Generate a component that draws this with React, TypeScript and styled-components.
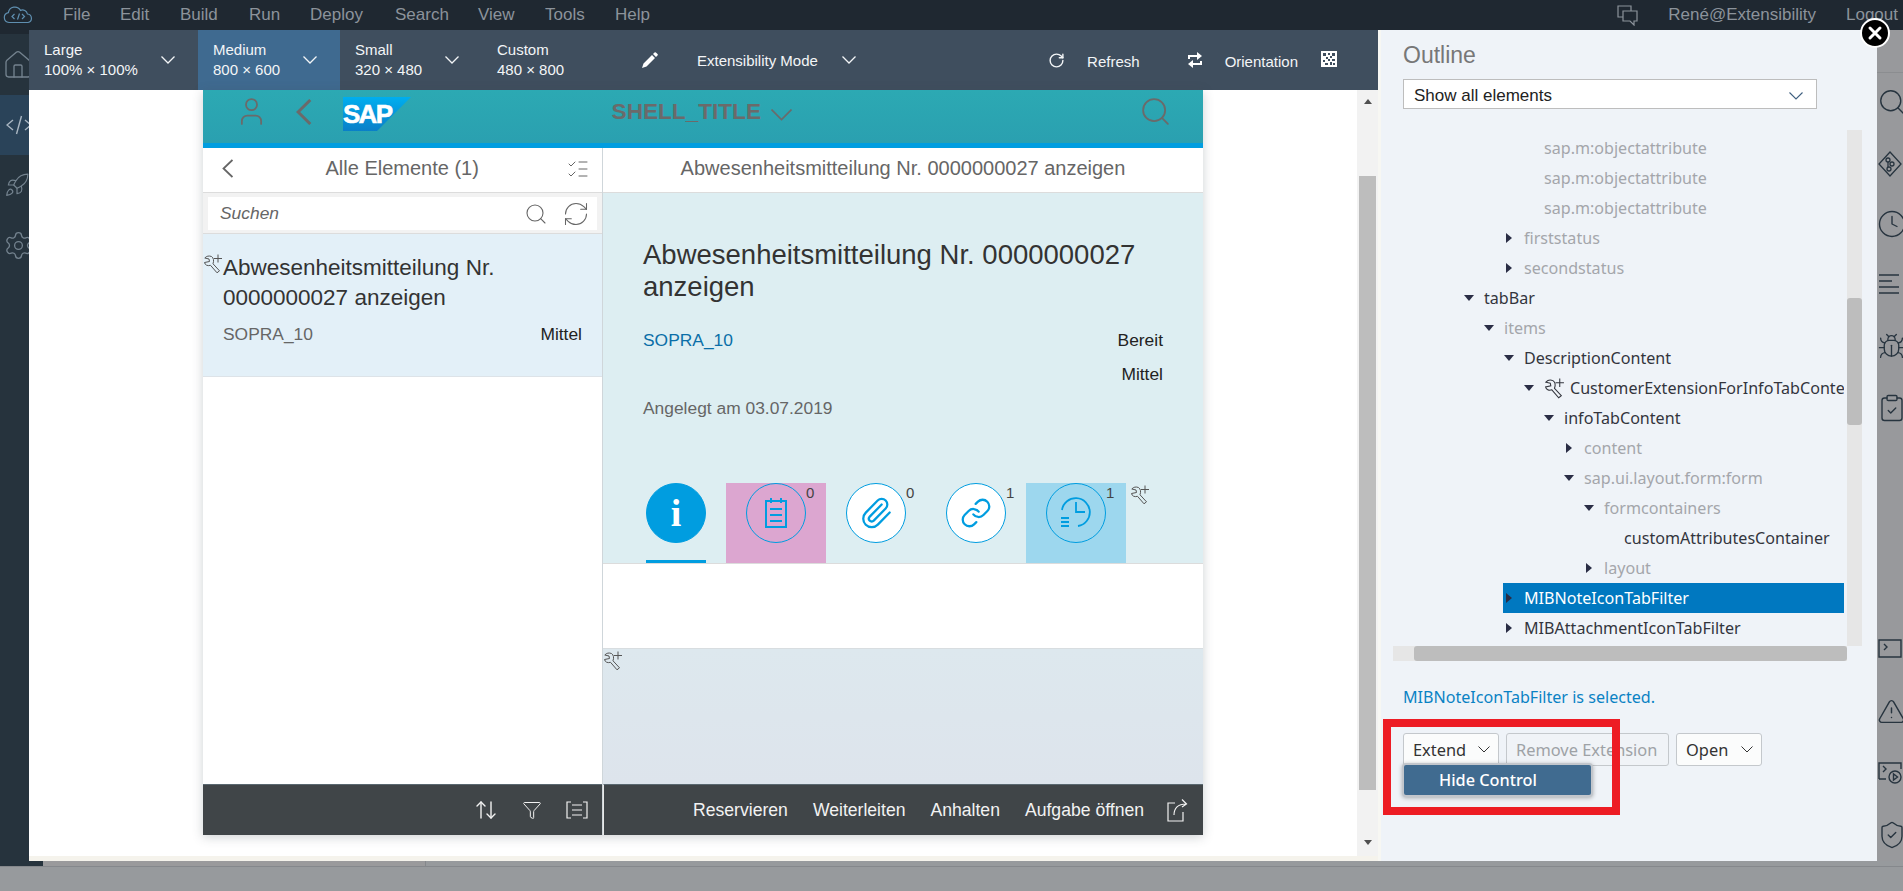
import React from "react";
import styled, { createGlobalStyle } from "styled-components";
import {
  Search, RefreshCw, RotateCw, House, Rocket, Settings, Bug,
  Clock, ClipboardCheck, TriangleAlert, Paperclip, Link, ShieldCheck, User, ArrowUpDown, Funnel,
  ListChecks,
} from "lucide-react";

const GlobalStyle = createGlobalStyle`
  html, body { margin: 0; padding: 0; overflow: hidden; background: #979a9d; }
  * { box-sizing: border-box; }
`;

const Page = styled.div`
  position: relative;
  width: 1903px;
  height: 891px;
  overflow: hidden;
  display: flex;
  flex-direction: column;
  font-family: "Liberation Sans", Arial, sans-serif;
  background: #979a9d;
`;

/* ---------- top menu ---------- */
const TopBar = styled.header`
  height: 30px;
  flex: none;
  background: #1f2831;
  display: flex;
  align-items: center;
  color: #8c939b;
  font-size: 17px;
`;
const LogoSlot = styled.div`
  width: 63px;
  padding-left: 3px;
  display: flex;
`;
const MenuItem = styled.span<{ $w: number }>`
  width: ${(p) => p.$w}px;
  flex: none;
`;
const TopRight = styled.div`
  margin-left: auto;
  display: flex;
  align-items: center;
  color: #8c939b;
  padding-right: 5px;
`;
const UserName = styled.span`
  margin: 0 30px 0 30px;
`;

/* ---------- body ---------- */
const Body = styled.div`
  height: 831px;
  flex: none;
  display: flex;
`;
const Sidebar = styled.nav`
  width: 29px;
  flex: none;
  background: #26333d;
  border-top: 4px solid #1f2831;
  display: flex;
  flex-direction: column;
  overflow: hidden;
`;
const SideButton = styled.div<{ $active?: boolean; $h?: number; $pad: number }>`
  height: ${(p) => p.$h ?? 60}px;
  flex: none;
  display: flex;
  align-items: center;
  padding-left: ${(p) => p.$pad}px;
  background: ${(p) => (p.$active ? "#2a4359" : "transparent")};
  color: ${(p) => (p.$active ? "#a9b6c2" : "#74838f")};
  svg { flex: none; }
`;
const MainColumn = styled.main`
  width: 1349px;
  flex: none;
  display: flex;
  flex-direction: column;
`;
const Toolbar = styled.div`
  height: 60px;
  flex: none;
  background: #3f4e5e;
  color: #f3f5f7;
  display: flex;
  align-items: center;
  font-size: 15px;
`;
const SizeTab = styled.div<{ $w: number; $active?: boolean }>`
  width: ${(p) => p.$w}px;
  height: 60px;
  flex: none;
  padding: 0 23px 0 15px;
  display: flex;
  align-items: center;
  justify-content: space-between;
  background: ${(p) => (p.$active ? "#3f6a90" : "transparent")};
`;
const SizeLabel = styled.div`
  line-height: 20px;
  white-space: nowrap;
  margin-top: -1px;
`;
const ToolbarEdit = styled.div`
  display: flex;
  align-items: center;
  margin-left: 30px;
`;
const ModeText = styled.span`
  margin: 0 24px 0 39px;
`;
const ToolbarRight = styled.div`
  margin-left: auto;
  padding-right: 41px;
  display: flex;
  align-items: center;
`;
const ToolText = styled.span<{ $l: number; $r: number }>`
  margin: 2px ${(p) => p.$r}px 0 ${(p) => p.$l}px;
`;
const QrMark = styled.div`
  width: 16px;
  height: 16px;
  background: #fff;
  margin-top: -3px;
  display: flex;
`;

/* ---------- preview ---------- */
const PreviewRow = styled.div`
  height: 771px;
  flex: none;
  display: flex;
`;
const PreviewStage = styled.div`
  width: 1328px;
  flex: none;
  background: #fff;
  border-bottom: 5px solid #f5f3ec;
  padding-left: 174px;
`;
const VScroll = styled.div`
  width: 21px;
  flex: none;
  background: #f2f2f2;
  border-bottom: 5px solid #f5f3ec;
  display: flex;
  flex-direction: column;
  align-items: center;
  padding-top: 9px;
`;
const ArrowUp = styled.div`
  width: 0;
  height: 0;
  border-left: 4.5px solid transparent;
  border-right: 4.5px solid transparent;
  border-bottom: 5px solid #505050;
`;
const ArrowDownMark = styled.div`
  width: 0;
  height: 0;
  border-left: 4.5px solid transparent;
  border-right: 4.5px solid transparent;
  border-top: 5px solid #505050;
  margin-top: 50px;
`;
const VThumb = styled.div`
  width: 17px;
  height: 614px;
  margin-top: 72px;
  flex: none;
  background: #bdbdbd;
`;
const Phone = styled.div`
  width: 1000px;
  height: 745px;
  display: flex;
  flex-direction: column;
  box-shadow: 0 2px 10px rgba(60, 70, 80, 0.25);
  background: #fff;
`;
const ShellBar = styled.div`
  height: 58px;
  flex: none;
  display: flex;
  align-items: flex-start;
  border-bottom: 5px solid #009de0;
  background: linear-gradient(#2ca9b3, #2aa0b0);
  color: #6b6a6a;
  padding-left: 32px;
`;
const ShellIcon = styled.div<{ $ml: number; $mt: number }>`
  margin-left: ${(p) => p.$ml}px;
  margin-top: ${(p) => p.$mt}px;
  display: flex;
  flex: none;
`;
const ShellTitle = styled.div`
  margin-left: 201px;
  margin-top: 8px;
  line-height: 28px;
  font-size: 22.6px;
  font-weight: 700;
  color: #6b6a6a;
  white-space: nowrap;
`;
const Panes = styled.div`
  height: 687px;
  flex: none;
  display: flex;
`;
const Master = styled.section`
  width: 400px;
  flex: none;
  display: flex;
  flex-direction: column;
  border-right: 1px solid #cfd6da;
`;
const PaneHeader = styled.div`
  height: 45px;
  flex: none;
  display: flex;
  align-items: center;
  background: #fff;
  border-bottom: 1px solid #dcdcdc;
  color: #666;
  padding-bottom: 3px;
`;
const MasterHeaderTitle = styled.span`
  margin: 0 auto;
  padding-left: 5px;
  font-size: 20px;
`;
const DetailHeaderTitle = styled.span`
  margin: 0 auto;
  font-size: 20px;
`;
const HeaderIconLeft = styled.div`
  padding-left: 19px;
  display: flex;
`;
const HeaderIconRight = styled.div`
  padding-right: 12px;
  display: flex;
`;
const SearchBand = styled.div`
  height: 41px;
  flex: none;
  background: #f2f2f2;
  border-bottom: 1px solid #dcdcdc;
  padding: 4px 5px;
`;
const SearchInput = styled.div`
  height: 33px;
  background: #fff;
  display: flex;
  align-items: center;
  padding: 0 7px 0 12px;
  color: #666;
  font-size: 17.4px;
  font-style: italic;
`;
const SearchActions = styled.div`
  margin-left: auto;
  display: flex;
  align-items: center;
  gap: 14px;
`;
const MasterItem = styled.div`
  height: 143px;
  flex: none;
  position: relative;
  background: #e3f0f8;
  border-bottom: 1px solid #dde3e8;
  padding: 19px 20px 0 20px;
`;
const MasterItemTitle = styled.div`
  font-size: 22.5px;
  line-height: 30px;
  color: #333;
`;
const MetaRow = styled.div`
  display: flex;
  justify-content: space-between;
  margin-top: 11px;
  font-size: 17.4px;
  line-height: 20px;
`;
const MetaOwner = styled.span`
  color: #666;
`;
const MetaValue = styled.span`
  color: #222;
`;
const Overlay = styled.div<{ $l: number; $t: number }>`
  position: absolute;
  left: ${(p) => p.$l}px;
  top: ${(p) => p.$t}px;
  display: flex;
  color: #555;
`;
const Spacer = styled.div`
  flex: 1;
  background: #fff;
`;
const Footer = styled.div`
  height: 51px;
  flex: none;
  background: #404548;
  border-top: 1px solid #5a6870;
  color: #f2f2f2;
  display: flex;
  align-items: center;
  justify-content: flex-end;
  font-size: 17.6px;
`;
const MasterFooter = styled(Footer)`
  gap: 24px;
  padding-right: 14px;
`;
const DetailFooter = styled(Footer)`
  padding-right: 15px;
  border-left: 1px solid #e8e8e8;
`;
const FooterAction = styled.span<{ $mr: number }>`
  margin-right: ${(p) => p.$mr}px;
`;
const Detail = styled.section`
  flex: 1;
  display: flex;
  flex-direction: column;
`;
const DetailHero = styled.div`
  height: 371px;
  flex: none;
  position: relative;
  background: #ddeef2;
  border-bottom: 1px solid #dcdcdc;
  display: flex;
  flex-direction: column;
  padding: 46px 40px 0 40px;
`;
const HeroTitle = styled.h1`
  margin: 0;
  font-size: 27.5px;
  font-weight: 400;
  line-height: 32px;
  color: #333;
  width: 510px;
`;
const HeroRow = styled.div<{ $mt: number }>`
  display: flex;
  justify-content: space-between;
  font-size: 17.4px;
  line-height: 20px;
  margin-top: ${(p) => p.$mt}px;
`;
const HeroLink = styled.span`
  color: #0a6ea8;
`;
const HeroMuted = styled.span`
  color: #666;
`;
const HeroEnd = styled.span`
  color: #222;
  margin-left: auto;
`;
const TabStrip = styled.div`
  margin-top: auto;
  display: flex;
  height: 80px;
  margin-left: 3px;
`;
const TabCell = styled.div<{ $bg?: string }>`
  width: 100px;
  height: 80px;
  flex: none;
  position: relative;
  background: ${(p) => p.$bg ?? "transparent"};
  padding-left: 20px;
`;
const InfoCell = styled.div`
  width: 60px;
  height: 80px;
  flex: none;
  margin-right: 20px;
  border-bottom: 3px solid #009de0;
`;
const TabCircle = styled.div<{ $fill?: string }>`
  width: 60px;
  height: 60px;
  border-radius: 50%;
  border: 1px solid #009de0;
  background: ${(p) => p.$fill ?? "transparent"};
  display: flex;
  align-items: center;
  justify-content: center;
  color: #009de0;
`;
const InfoGlyph = styled.span`
  color: #fff;
  font-family: "Liberation Serif", serif;
  font-weight: 700;
  font-size: 38px;
  line-height: 1;
`;
const TabBadge = styled.span`
  position: absolute;
  left: 80px;
  top: 1px;
  font-size: 15px;
  color: #444;
`;
const DetailWhite = styled.div`
  height: 85px;
  flex: none;
  background: #fff;
  border-bottom: 1px solid #d8dde0;
`;
const DetailGrey = styled.div`
  flex: 1;
  position: relative;
  background: linear-gradient(#dde8ee, #dde4ec);
`;

/* ---------- outline ---------- */
const Outline = styled.aside`
  width: 499px;
  flex: none;
  background: #eff3f8;
  border-left: 3px solid #f7f7f3;
  font-family: "Noto Sans", "Open Sans", sans-serif;
  position: relative;
  padding: 0 0 0 22px;
`;
const OutlineTitle = styled.h2`
  margin: 0;
  padding-top: 11px;
  height: 49px;
  font-size: 23px;
  font-weight: 300;
  font-family: "Liberation Sans", sans-serif;
  line-height: 28px;
  color: #777;
`;
const SelectBox = styled.div`
  width: 414px;
  height: 30px;
  background: #fff;
  border: 1px solid #bdbdbd;
  display: flex;
  align-items: center;
  justify-content: space-between;
  padding: 3px 13px 0 10px;
  font-size: 17px;
  color: #222;
  font-family: "Liberation Sans", sans-serif;
`;
const TreeFrame = styled.div`
  margin: 21px 0 0 -10px;
  width: 469px;
  height: 531px;
  display: grid;
  grid-template-columns: 454px 15px;
  grid-template-rows: 516px 15px;
`;
const TreeView = styled.div`
  overflow: hidden;
  padding-top: 3px;
`;
const TreeRow = styled.div<{ $dim?: boolean; $selected?: boolean; $pad: number }>`
  height: 30px;
  display: flex;
  align-items: center;
  white-space: nowrap;
  font-size: 16.1px;
  padding-left: ${(p) => p.$pad}px;
  color: ${(p) => (p.$selected ? "#fff" : p.$dim ? "#a4a6ab" : "#33353d")};
  background: ${(p) => (p.$selected ? "#0078c0" : "transparent")};
  margin-left: ${(p) => (p.$selected ? 110 : 0)}px;
  margin-right: 3px;
  overflow: hidden;
`;
const Caret = styled.span<{ $open?: boolean; $none?: boolean }>`
  width: 21px;
  flex: none;
  display: flex;
  justify-content: center;
  padding-right: 9px;
  &::before {
    content: "";
    display: ${(p) => (p.$none ? "none" : "block")};
    width: 0;
    height: 0;
    ${(p) =>
      p.$open
        ? "border-left: 5px solid transparent; border-right: 5px solid transparent; border-top: 6px solid #2a2d45;"
        : "border-top: 5px solid transparent; border-bottom: 5px solid transparent; border-left: 6px solid #2a2d45;"}
  }
`;
const TreeWrench = styled.span`
  margin-right: 5px;
  display: flex;
  color: #33353d;
`;
const VTrack = styled.div`
  background: #e6e6e6;
  padding-top: 168px;
`;
const VTrackThumb = styled.div`
  height: 127px;
  background: #bdbdbd;
  border-radius: 3px;
`;
const HTrack = styled.div`
  background: #e6e6e6;
  padding-left: 21px;
`;
const HTrackThumb = styled.div`
  height: 15px;
  background: #bdbdbd;
  border-radius: 3px;
`;
const SelectedNote = styled.div`
  margin-top: 25px;
  height: 22px;
  line-height: 22px;
  font-size: 16.1px;
  color: #0a82c4;
`;
const ButtonRow = styled.div`
  position: relative;
  margin-top: 25px;
  display: flex;
  gap: 7px;
`;
const OutlineButton = styled.div<{ $w: number; $disabled?: boolean }>`
  width: ${(p) => p.$w}px;
  height: 33px;
  background: ${(p) => (p.$disabled ? "#f0f3f7" : "#fbfcfc")};
  border: 1px solid #c4c8cc;
  border-radius: 3px;
  display: flex;
  align-items: center;
  justify-content: space-between;
  padding: 0 8px 0 9px;
  font-size: 16.4px;
  color: ${(p) => (p.$disabled ? "#9ea2a6" : "#333")};
  white-space: nowrap;
`;
const Menu = styled.div`
  position: absolute;
  left: -1px;
  top: 30px;
  width: 191px;
  height: 34px;
  background: #406b90;
  border: 2px solid #c2c6cc;
  border-radius: 4px;
  box-shadow: 0 1px 4px rgba(0, 0, 0, 0.3);
  color: #fff;
  font-size: 16.3px;
  font-weight: 500;
  display: flex;
  align-items: center;
  padding-left: 35px;
`;
const Highlight = styled.div`
  position: absolute;
  left: 2px;
  top: 689px;
  width: 237px;
  height: 96px;
  border: 8px solid #ed1c24;
`;
const Rail = styled.aside`
  flex: 1;
  background: #98999c;
  display: flex;
  flex-direction: column;
  color: #27343f;
  overflow: hidden;
`;
const RailHead = styled.div`
  height: 43px;
  flex: none;
  border-bottom: 1px solid #8b8d90;
  margin-bottom: -2px;
`;
const RailIcon = styled.div<{ $mt?: number; $ml: number }>`
  height: 62px;
  flex: none;
  margin-top: ${(p) => p.$mt ?? 0}px;
  padding-left: ${(p) => p.$ml}px;
  display: flex;
  align-items: center;
  svg { flex: none; }
`;
const CloseBadge = styled.div`
  position: absolute;
  left: 1860px;
  top: 18px;
  width: 30px;
  height: 30px;
  border-radius: 50%;
  background: #000;
  border: 2px solid #fff;
  display: flex;
  align-items: center;
  justify-content: center;
  z-index: 3;
`;

/* ---------- bottom ---------- */
const BottomTrack = styled.div`
  height: 6px;
  flex: none;
  display: flex;
  border-bottom: 1px solid #85888c;
  background: #90939a;
`;
const BottomDark = styled.div`
  width: 43px;
  background: #26333d;
`;
const BottomLight = styled.div`
  width: 383px;
  background: #9a9a9c;
  border-right: 1px solid #85888c;
`;
const BottomFill = styled.div`
  flex: 1;
  background: #979a9d;
`;

/* ---------- drawings ---------- */
const WrenchPlus = ({ size = 20 }: { size?: number }) => (
  <svg width={size} height={size} viewBox="0 0 20 20" fill="none" stroke="currentColor" strokeWidth="1">
    <path d="M8.500 2.500C6 1.500 3.500 2 1.800 4L6 5 6.500 7.500 1.500 8.500C2 11 4.500 12.300 7.500 11.300L14 18.800 16.500 16.800 10 9.800C11 7 10.800 4 8.500 2.500Z" />
    <path d="M15 .5v8M11 4.500h8" />
  </svg>
);

const Chevron = ({ w, color = "currentColor", sw = 1.3 }: { w: number; color?: string; sw?: number }) => (
  <svg width={w} height={w / 2 + 1} viewBox={`0 0 ${w} ${w / 2 + 1}`} fill="none" stroke={color} strokeWidth={sw}>
    <path d={`M.5.5 ${w / 2} ${w / 2} ${w - 0.5} .5`} />
  </svg>
);

const BackChevron = ({ h, sw }: { h: number; sw: number }) => (
  <svg width={h * 0.6} height={h} viewBox={`0 0 ${h * 0.6} ${h}`} fill="none" stroke="currentColor" strokeWidth={sw}>
    <path d={`M${h * 0.55} 1 ${h * 0.08} ${h / 2} ${h * 0.55} ${h - 1}`} />
  </svg>
);

const CloudLogo = () => (
  <svg width="31" height="18" viewBox="0 0 31 18" fill="none" stroke="#5f8fb0" strokeWidth="1.2">
    <path d="M8 16.500H6a5 5 0 0 1-.6-9.900A6.500 6.500 0 0 1 17.500 4.400 5 5 0 0 1 24.400 8 4.300 4.300 0 0 1 25 16.500Z" />
    <path d="M11.500 8 9 10.500 11.500 13M19 8l2.500 2.500L19 13M16.500 7.500l-2 6" />
  </svg>
);

const ChatMark = () => (
  <svg width="21" height="21" viewBox="0 0 21 21" fill="none" stroke="#8c939b" strokeWidth="1.2">
    <path d="M6 12H1V1h13v5" />
    <path d="M6 6h14v10h-3v4l-4-4H6Z" />
  </svg>
);

const CodeMark = () => (
  <svg width="26" height="22" viewBox="0 0 26 22" fill="none" stroke="currentColor" strokeWidth="1.4">
    <path d="M7 6 1 11l6 5M19 6l6 5-6 5M15.500 2l-5 18" />
  </svg>
);

const PencilMark = () => (
  <svg width="16" height="16" viewBox="0 0 16 16" fill="#fff">
    <path d="M0 16l1.500-4.500L10 3l3 3-8.500 8.500ZM11 2l1.500-1.500a1 1 0 0 1 1.400 0l1.600 1.600a1 1 0 0 1 0 1.400L14 5Z" />
  </svg>
);

const OrientationMark = () => (
  <svg width="16" height="16" viewBox="0 0 16 16" fill="#fff">
    <path d="M1 3h9V0l5 4-5 4V5H3v2H1ZM15 13H6v3L1 12l5-4v3h7V9h2Z" />
  </svg>
);

const QrPattern = () => (
  <svg width="16" height="16" viewBox="0 0 16 16" fill="#3f4e5e">
    <path d="M2 2h3v3H2zM7 2h2v2H7zM11 2h3v3h-3zM5 6h2v2H5zM9 5h2v2H9zM2 9h2v2H2zM7 8h2v2H7zM11 8h3v2h-3zM4 12h3v2H4zM9 11h2v3H9zM12 12h2v2h-2z" />
  </svg>
);

const SapLogo = () => (
  <svg width="68" height="34" viewBox="0 0 68 34">
    <defs>
      <linearGradient id="sapBlue" x1="0" y1="0" x2="0" y2="1">
        <stop offset="0" stopColor="#00aeef" />
        <stop offset="1" stopColor="#0a7fc8" />
      </linearGradient>
    </defs>
    <polygon points="0,0 68,0 34,34 0,34" fill="url(#sapBlue)" />
    <text x="0" y="26" fontFamily="Liberation Sans" fontWeight="700" fontSize="26" fill="#fff" textLength="50" stroke="#fff" strokeWidth=".6">SAP</text>
  </svg>
);

const NoteMark = () => (
  <svg width="24" height="32" viewBox="0 0 24 32" fill="none" stroke="currentColor" strokeWidth="2">
    <path d="M2 4h20v26H2zM7 1v5M17 1v5M6 12h12M6 18h12M6 24h12" />
  </svg>
);

const HistoryMark = () => (
  <svg width="34" height="36" viewBox="0 0 34 36" fill="none" stroke="currentColor" strokeWidth="1.800">
    <path d="M3 15A14 14 0 1 1 19 31M17 7v10h9M2 23h8M2 27h8M2 31h8" />
  </svg>
);

const DiamondMark = () => (
  <svg width="24" height="26" viewBox="0 0 24 26" fill="none" stroke="currentColor" strokeWidth="1.300">
    <path d="M12 1 23 13 12 25 1 13Z" />
    <circle cx="10" cy="9" r="2" />
    <circle cx="14" cy="13" r="2" />
    <circle cx="11" cy="18" r="2" />
    <path d="M10 11v5" />
  </svg>
);

const LinesMark = () => (
  <svg width="23" height="22" viewBox="0 0 23 22" fill="none" stroke="currentColor" strokeWidth="1.600">
    <path d="M1 2h20M1 8h13M1 14h20M1 20h20" />
  </svg>
);

const ConsoleMark = () => (
  <svg width="24" height="20" viewBox="0 0 24 20" fill="none" stroke="currentColor" strokeWidth="1.400">
    <path d="M1 1h22v17H1zM6 5l3 3-3 3" />
  </svg>
);

const ConsolePlayMark = () => (
  <svg width="24" height="24" viewBox="0 0 24 24" fill="none" stroke="currentColor" strokeWidth="1.400">
    <path d="M1 18V2h22v6M1 18h7M5 5l3 3-3 3" />
    <circle cx="17" cy="16" r="6" />
    <path d="M15.500 13v6l4-3Z" />
  </svg>
);

const NotesFooterMark = () => (
  <svg width="22" height="20" viewBox="0 0 22 20" fill="none" stroke="currentColor" strokeWidth="1.200">
    <path d="M5 2H1v16h4M17 2h4v16h-4M6 5h10M6 10h10M6 15h10" />
  </svg>
);

const ShareMark = () => (
  <svg width="22" height="24" viewBox="0 0 22 24" fill="none" stroke="currentColor" strokeWidth="1.200">
    <path d="M9 5H2v18h15v-9" />
    <path d="M8 17C8 10 12 6 20 6M16 1.500 20.500 6 16 9" />
  </svg>
);

const menuItems: [string, number][] = [
  ["File", 57], ["Edit", 60], ["Build", 69], ["Run", 61], ["Deploy", 85],
  ["Search", 83], ["View", 67], ["Tools", 70], ["Help", 60],
];

type Node = { t: string; lvl: number; dim?: boolean; caret?: "open" | "closed"; selected?: boolean; wrench?: boolean };
const nodes: Node[] = [
  { t: "sap.m:objectattribute", lvl: 3, dim: true },
  { t: "sap.m:objectattribute", lvl: 3, dim: true },
  { t: "sap.m:objectattribute", lvl: 3, dim: true },
  { t: "firststatus", lvl: 2, dim: true, caret: "closed" },
  { t: "secondstatus", lvl: 2, dim: true, caret: "closed" },
  { t: "tabBar", lvl: 0, caret: "open" },
  { t: "items", lvl: 1, dim: true, caret: "open" },
  { t: "DescriptionContent", lvl: 2, caret: "open" },
  { t: "CustomerExtensionForInfoTabContent", lvl: 3, caret: "open", wrench: true },
  { t: "infoTabContent", lvl: 4, caret: "open" },
  { t: "content", lvl: 5, dim: true, caret: "closed" },
  { t: "sap.ui.layout.form:form", lvl: 5, dim: true, caret: "open" },
  { t: "formcontainers", lvl: 6, dim: true, caret: "open" },
  { t: "customAttributesContainer", lvl: 7 },
  { t: "layout", lvl: 6, dim: true, caret: "closed" },
  { t: "MIBNoteIconTabFilter", lvl: 2, caret: "closed", selected: true },
  { t: "MIBAttachmentIconTabFilter", lvl: 2, caret: "closed" },
];

const railIcons: [React.ReactNode, number, number][] = [
  [<Search key="a" size={30} strokeWidth={1.1} />, 0, -2],
  [<DiamondMark key="b" />, 0, 1],
  [<Clock key="c" size={30} strokeWidth={1.1} />, -2, -2],
  [<LinesMark key="d" />, -2, 1],
  [<Bug key="e" size={29} strokeWidth={1.1} />, 0, -2],
  [<ClipboardCheck key="f" size={30} strokeWidth={1.1} />, 0, -2],
  [<ConsoleMark key="g" />, 179, 1],
  [<TriangleAlert key="h" size={29} strokeWidth={1.2} />, 0, -2],
  [<ConsolePlayMark key="i" />, 0, 1],
  [<ShieldCheck key="j" size={30} strokeWidth={1.1} />, 0, -2],
];

export default function App() {
  return (
    <Page>
      <GlobalStyle />
      <TopBar>
        <LogoSlot><CloudLogo /></LogoSlot>
        {menuItems.map(([m, w]) => <MenuItem key={m} $w={w}>{m}</MenuItem>)}
        <TopRight>
          <ChatMark />
          <UserName>René@Extensibility</UserName>
          <span>Logout</span>
        </TopRight>
      </TopBar>
      <Body>
        <Sidebar>
          <SideButton $h={61} $pad={2}><House size={32} strokeWidth={1} /></SideButton>
          <SideButton $active $pad={6}><CodeMark /></SideButton>
          <SideButton $pad={4}><Rocket size={26} strokeWidth={1.1} /></SideButton>
          <SideButton $pad={3}><Settings size={31} strokeWidth={1} /></SideButton>
        </Sidebar>
        <MainColumn>
          <Toolbar>
            <SizeTab $w={169}><SizeLabel>Large<br />100% × 100%</SizeLabel><Chevron w={14} /></SizeTab>
            <SizeTab $w={142} $active><SizeLabel>Medium<br />800 × 600</SizeLabel><Chevron w={14} /></SizeTab>
            <SizeTab $w={142}><SizeLabel>Small<br />320 × 480</SizeLabel><Chevron w={14} /></SizeTab>
            <SizeTab $w={130}><SizeLabel>Custom<br />480 × 800</SizeLabel></SizeTab>
            <ToolbarEdit>
              <PencilMark />
              <ModeText>Extensibility Mode</ModeText>
              <Chevron w={14} />
            </ToolbarEdit>
            <ToolbarRight>
              <RotateCw size={17} strokeWidth={2} />
              <ToolText $l={22} $r={47}>Refresh</ToolText>
              <OrientationMark />
              <ToolText $l={22} $r={23}>Orientation</ToolText>
              <QrMark><QrPattern /></QrMark>
            </ToolbarRight>
          </Toolbar>
          <PreviewRow>
            <PreviewStage>
              <Phone>
                <ShellBar>
                  <ShellIcon $ml={0} $mt={5}><User size={33} strokeWidth={1.3} /></ShellIcon>
                  <ShellIcon $ml={28} $mt={9}><BackChevron h={26} sw={3} /></ShellIcon>
                  <ShellIcon $ml={31} $mt={7}><SapLogo /></ShellIcon>
                  <ShellTitle>SHELL_TITLE</ShellTitle>
                  <ShellIcon $ml={10} $mt={19}><Chevron w={21} sw={1.6} /></ShellIcon>
                  <ShellIcon $ml={347} $mt={5}><Search size={33} strokeWidth={1.3} /></ShellIcon>
                </ShellBar>
                <Panes>
                  <Master>
                    <PaneHeader>
                      <HeaderIconLeft><BackChevron h={19} sw={1.8} /></HeaderIconLeft>
                      <MasterHeaderTitle>Alle Elemente (1)</MasterHeaderTitle>
                      <HeaderIconRight><ListChecks size={24} strokeWidth={1} /></HeaderIconRight>
                    </PaneHeader>
                    <SearchBand>
                      <SearchInput>
                        Suchen
                        <SearchActions>
                          <Search size={24} strokeWidth={1.1} />
                          <RefreshCw size={28} strokeWidth={0.9} />
                        </SearchActions>
                      </SearchInput>
                    </SearchBand>
                    <MasterItem>
                      <Overlay $l={0} $t={20}><WrenchPlus /></Overlay>
                      <MasterItemTitle>Abwesenheitsmitteilung Nr. 0000000027 anzeigen</MasterItemTitle>
                      <MetaRow><MetaOwner>SOPRA_10</MetaOwner><MetaValue>Mittel</MetaValue></MetaRow>
                    </MasterItem>
                    <Spacer />
                    <MasterFooter>
                      <ArrowUpDown size={24} strokeWidth={1.4} />
                      <Funnel size={20} strokeWidth={1.2} />
                      <NotesFooterMark />
                    </MasterFooter>
                  </Master>
                  <Detail>
                    <PaneHeader><DetailHeaderTitle>Abwesenheitsmitteilung Nr. 0000000027 anzeigen</DetailHeaderTitle></PaneHeader>
                    <DetailHero>
                      <HeroTitle>Abwesenheitsmitteilung Nr. 0000000027 anzeigen</HeroTitle>
                      <HeroRow $mt={27}><HeroLink>SOPRA_10</HeroLink><HeroEnd>Bereit</HeroEnd></HeroRow>
                      <HeroRow $mt={14}><HeroEnd>Mittel</HeroEnd></HeroRow>
                      <HeroRow $mt={14}><HeroMuted>Angelegt am 03.07.2019</HeroMuted></HeroRow>
                      <TabStrip>
                        <InfoCell><TabCircle $fill="#009de0"><InfoGlyph>i</InfoGlyph></TabCircle></InfoCell>
                        <TabCell $bg="#dca6d0"><TabCircle><NoteMark /></TabCircle><TabBadge>0</TabBadge></TabCell>
                        <TabCell><TabCircle $fill="#fff"><Paperclip size={34} strokeWidth={1.6} /></TabCircle><TabBadge>0</TabBadge></TabCell>
                        <TabCell><TabCircle $fill="#fff"><Link size={32} strokeWidth={1.7} /></TabCircle><TabBadge>1</TabBadge></TabCell>
                        <TabCell $bg="#9dd7ee"><TabCircle><HistoryMark /></TabCircle><TabBadge>1</TabBadge></TabCell>
                      </TabStrip>
                      <Overlay $l={527} $t={292}><WrenchPlus /></Overlay>
                    </DetailHero>
                    <DetailWhite />
                    <DetailGrey><Overlay $l={0} $t={2}><WrenchPlus /></Overlay></DetailGrey>
                    <DetailFooter>
                      <FooterAction $mr={25}>Reservieren</FooterAction>
                      <FooterAction $mr={25}>Weiterleiten</FooterAction>
                      <FooterAction $mr={25}>Anhalten</FooterAction>
                      <FooterAction $mr={22}>Aufgabe öffnen</FooterAction>
                      <ShareMark />
                    </DetailFooter>
                  </Detail>
                </Panes>
              </Phone>
            </PreviewStage>
            <VScroll>
              <ArrowUp />
              <VThumb />
              <ArrowDownMark />
            </VScroll>
          </PreviewRow>
        </MainColumn>
        <Outline>
          <OutlineTitle>Outline</OutlineTitle>
          <SelectBox>Show all elements<Chevron w={14} color="#3f5f7f" sw={1.1} /></SelectBox>
          <TreeFrame>
            <TreeView>
              {nodes.map((n, i) => (
                <TreeRow key={i} $dim={n.dim} $selected={n.selected} $pad={n.selected ? 0 : 70 + n.lvl * 20}>
                  <Caret $open={n.caret === "open"} $none={!n.caret} />
                  {n.wrench && <TreeWrench><WrenchPlus size={21} /></TreeWrench>}
                  {n.t}
                </TreeRow>
              ))}
            </TreeView>
            <VTrack><VTrackThumb /></VTrack>
            <HTrack><HTrackThumb /></HTrack>
          </TreeFrame>
          <SelectedNote>MIBNoteIconTabFilter is selected.</SelectedNote>
          <ButtonRow>
            <OutlineButton $w={96}>Extend<Chevron w={12} sw={1} /></OutlineButton>
            <OutlineButton $w={163} $disabled>Remove Extension</OutlineButton>
            <OutlineButton $w={86}>Open<Chevron w={12} sw={1} /></OutlineButton>
            <Menu>Hide Control</Menu>
          </ButtonRow>
          <Highlight />
        </Outline>
        <Rail>
          <RailHead />
          {railIcons.map(([icon, mt, ml], i) => <RailIcon key={i} $mt={mt} $ml={ml}>{icon}</RailIcon>)}
        </Rail>
      </Body>
      <BottomTrack>
        <BottomDark />
        <BottomLight />
        <BottomFill />
      </BottomTrack>
      <CloseBadge>
        <svg width="16" height="16" viewBox="0 0 16 16" stroke="#fff" strokeWidth="3" strokeLinecap="round"><path d="M3 3l10 10M13 3 3 13" /></svg>
      </CloseBadge>
    </Page>
  );
}
